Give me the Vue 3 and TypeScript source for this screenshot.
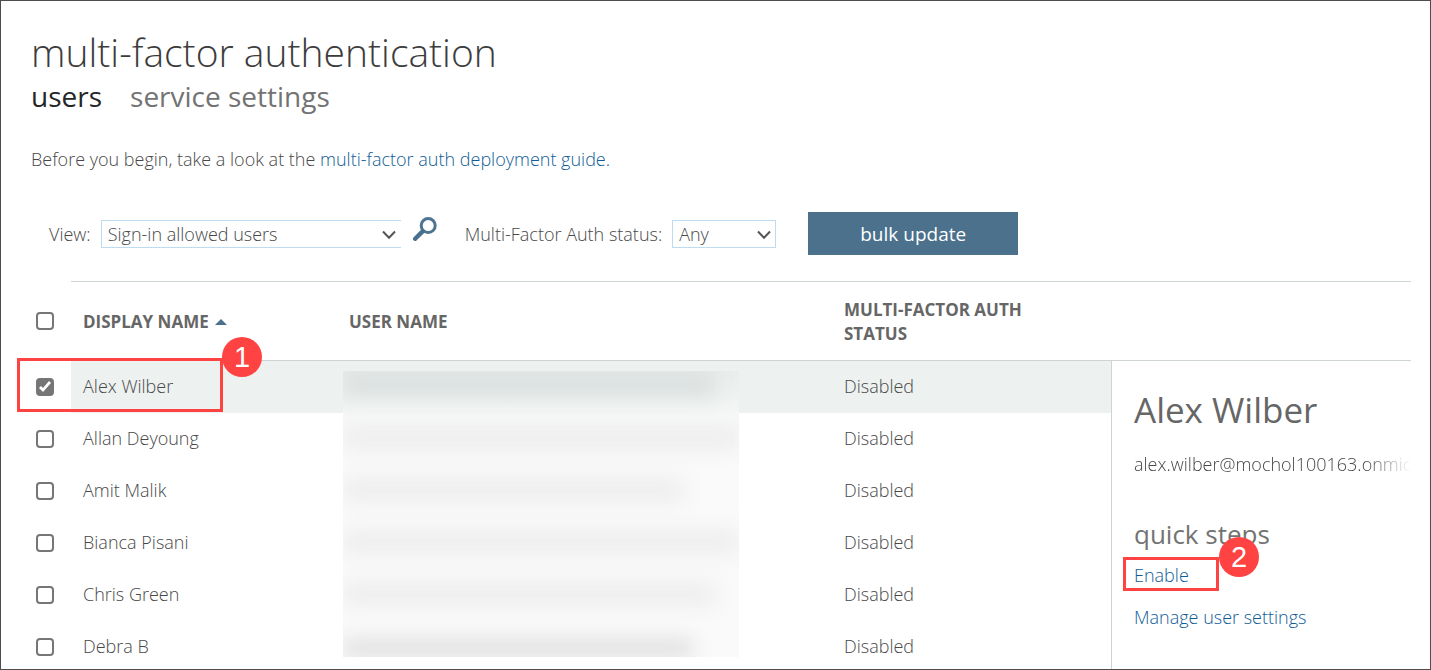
<script setup lang="ts">
import { computed, ref } from 'vue'

interface User {
  id: number
  name: string
  status: string
  selected: boolean
}

const users = ref<User[]>([
  { id: 1, name: 'Alex Wilber', status: 'Disabled', selected: true },
  { id: 2, name: 'Allan Deyoung', status: 'Disabled', selected: false },
  { id: 3, name: 'Amit Malik', status: 'Disabled', selected: false },
  { id: 4, name: 'Bianca Pisani', status: 'Disabled', selected: false },
  { id: 5, name: 'Chris Green', status: 'Disabled', selected: false },
  { id: 6, name: 'Debra B', status: 'Disabled', selected: false },
])

const view = ref('allowed')
const status = ref('any')

const allSelected = computed({
  get: () => users.value.every((u) => u.selected),
  set: (value: boolean) => users.value.forEach((u) => (u.selected = value)),
})
</script>

<template>
  <main class="page">
    <header class="head">
      <h1>multi-factor authentication</h1>
      <nav class="tabs">
        <a href="#users" class="tab current" aria-current="page">users</a>
        <a href="#settings" class="tab">service settings</a>
      </nav>
      <p class="intro">
        Before you begin, take a look at the
        <a href="#guide">multi-factor auth deployment guide.</a>
      </p>
    </header>

    <form class="filters" @submit.prevent>
      <label for="view">View:</label>
      <span class="picker wide">
        <select id="view" v-model="view">
          <option value="allowed">Sign-in allowed users</option>
          <option value="blocked">Sign-in blocked users</option>
        </select>
        <svg class="chevron" viewBox="0 0 14 10" aria-hidden="true"><path d="M1 1.5 7 7.7 13 1.5" /></svg>
      </span>
      <button class="search" type="submit" aria-label="Search">
        <svg viewBox="0 0 24 24" aria-hidden="true">
          <circle cx="15.2" cy="8.6" r="7" fill="#fff" stroke="#4d7592" stroke-width="3" />
          <path d="M9.6 14.4 2.2 21.8" stroke="#4a708b" stroke-width="4.4" stroke-linecap="round" />
        </svg>
      </button>
      <label for="status">Multi-Factor Auth status:</label>
      <span class="picker narrow">
        <select id="status" v-model="status">
          <option value="any">Any</option>
          <option value="enabled">Enabled</option>
          <option value="enforced">Enforced</option>
        </select>
        <svg class="chevron" viewBox="0 0 14 10" aria-hidden="true"><path d="M1 1.5 7 7.7 13 1.5" /></svg>
      </span>
      <button class="bulk" type="button">bulk update</button>
    </form>

    <section class="content">
      <div class="list">
        <table>
          <colgroup>
            <col class="c-check" />
            <col class="c-name" />
            <col class="c-user" />
            <col />
          </colgroup>
          <thead>
            <tr>
              <td class="check"><input v-model="allSelected" type="checkbox" aria-label="Select all users" /></td>
              <th scope="col">
                DISPLAY NAME
                <svg class="sort" viewBox="0 0 12 6" aria-hidden="true"><path d="M0 6 6 0l6 6z" /></svg>
              </th>
              <th scope="col">USER NAME</th>
              <th scope="col" class="status-head">MULTI-FACTOR AUTH STATUS</th>
            </tr>
          </thead>
          <tbody>
            <tr v-for="user in users" :key="user.id" :class="{ selected: user.selected }">
              <td class="check"><input :id="`user-${user.id}`" v-model="user.selected" type="checkbox" /></td>
              <td><label :for="`user-${user.id}`">{{ user.name }}</label></td>
              <td></td>
              <td>{{ user.status }}</td>
            </tr>
          </tbody>
        </table>
        <div class="redacted" aria-hidden="true">
          <i v-for="n in 6" :key="n" :class="`smear s${n}`"></i>
        </div>
        <div class="callout first"><b>1</b></div>
      </div>

      <aside class="side">
        <div class="side-head"></div>
        <div class="side-body">
          <h2>Alex Wilber</h2>
          <p class="mail">alex.wilber@mochol100163.onmicrosoft.com</p>
          <h3>quick steps</h3>
          <div class="step">
            <a href="#enable">Enable</a>
            <div class="callout second"><b>2</b></div>
          </div>
          <div class="step"><a href="#manage">Manage user settings</a></div>
        </div>
      </aside>
    </section>
  </main>
</template>

<style>
body {
  background: #fff;
}
</style>

<style scoped>
* {
  box-sizing: border-box;
}

.page {
  height: 100vh;
  overflow: hidden;
  border: 1px solid #504b4e;
  color: #484848;
  background: #fff;
  font: 300 18px/24px "Open Sans", "Noto Sans", sans-serif;
}

h1,
h2,
h3,
p {
  margin: 0;
}

h2,
h3 {
  font-weight: 400;
}

a {
  color: #0f5c96;
  text-decoration: none;
}

.head {
  padding: 23px 30px 0;
}

h1 {
  color: #3c3c3c;
  font-size: 39px;
  line-height: 56px;
  font-weight: 300;
}

.tabs {
  display: flex;
  gap: 28px;
  font-size: 28px;
  line-height: 32px;
  font-weight: 400;
}

.tab {
  color: #737373;
}

.tab.current {
  color: #262626;
}

.intro {
  margin-top: 35px;
}

.filters {
  display: flex;
  align-items: center;
  height: 44px;
  margin-top: 41px;
  padding-left: 48px;
}

.picker {
  position: relative;
  height: 28px;
  margin-left: 10px;
}

.wide {
  width: 300px;
}

.narrow {
  width: 104px;
}

select {
  appearance: none;
  width: 100%;
  height: 28px;
  padding: 0 24px 0 6px;
  border: 1px solid #bddcf2;
  border-radius: 0;
  background: #fff;
  color: inherit;
  font: inherit;
  line-height: 24px;
}

.wide select {
  border-right: 0;
}

.chevron {
  position: absolute;
  right: 5px;
  top: 10px;
  width: 14px;
  height: 10px;
  fill: none;
  stroke: #555;
  stroke-width: 2;
  pointer-events: none;
}

button {
  padding: 0;
  border: 0;
  font: inherit;
  cursor: pointer;
}

.search {
  width: 24px;
  height: 24px;
  margin: 0 28px 10px 12px;
  background: none;
}

.search svg {
  display: block;
  fill: none;
}

.bulk {
  align-self: flex-start;
  width: 210px;
  height: 43px;
  padding-top: 1px;
  margin-left: 32px;
  background: #4b718d;
  color: #fff;
  font-size: 19px;
  font-weight: 400;
}

.content {
  display: flex;
  margin: 25px 19px 0 17px;
}

.list {
  position: relative;
  flex: 1;
}

table {
  width: 100%;
  table-layout: fixed;
  border-spacing: 0;
}

.c-check {
  width: 53px;
}

.c-name {
  width: 266px;
}

.c-user {
  width: 495px;
}

th,
td {
  padding: 0 0 0 12px;
  text-align: left;
}

thead th {
  height: 80px;
  padding-top: 2px;
  border-top: 1px solid #ced4d4;
  border-bottom: 1px solid #ced4d4;
  color: #666;
  font-size: 17px;
  font-weight: 700;
}

.status-head {
  padding-right: 80px;
}

.sort {
  width: 12px;
  height: 6px;
  margin-left: 2px;
  vertical-align: 3px;
  fill: #4b718d;
}

tbody td {
  height: 52px;
}

tbody td:not(.check) {
  padding-bottom: 2px;
}

tbody .selected td:not(.check) {
  background: #edf1f0;
}

.check {
  padding-left: 18px;
}

.check input {
  appearance: none;
  display: block;
  width: 18px;
  height: 18px;
  margin: 0;
  border: 2px solid #767676;
  border-radius: 4px;
  background: #fff;
}

.check input:checked {
  background: #767676;
}

.check input:checked::after {
  content: "";
  display: block;
  width: 14px;
  height: 14px;
  background: #fff;
  clip-path: polygon(1px 8px, 3px 6px, 5px 8px, 11px 1px, 13px 3px, 5px 12px);
}

.redacted {
  position: absolute;
  left: 325px;
  top: 90px;
  display: grid;
  grid-template-rows: 41px repeat(4, 52px) 37px;
  width: 396px;
  height: 286px;
  overflow: hidden;
  background: linear-gradient(#e9edec, #f0f3f2 30px, #f7f8f8 44px, #fafafa 80px);
}

.smear {
  align-self: center;
  height: 24px;
  background: #ededed;
  filter: blur(10px);
}

.s1 {
  align-self: start;
  height: 26px;
  margin-right: 24px;
  background: #dbe0df;
}

.s3 {
  margin-right: 56px;
}

.s5 {
  margin-right: 24px;
}

.s6 {
  align-self: end;
  height: 18px;
  margin-right: 46px;
  background: #dedede;
}

.callout {
  position: absolute;
  border: 3px solid #ff4343;
  pointer-events: none;
}

.callout b {
  position: absolute;
  width: 40px;
  height: 40px;
  border-radius: 50%;
  background: #ff4343;
  color: #fff;
  font: 400 29px/40px "Liberation Sans", Arial, sans-serif;
  text-align: center;
}

.first {
  left: -1px;
  top: 77px;
  width: 206px;
  height: 54px;
}

.first b {
  left: 202px;
  top: -24px;
}

.second {
  left: -11px;
  top: -6px;
  width: 96px;
  height: 34px;
}

.second b {
  left: 93px;
  top: -23px;
}

.side {
  width: 300px;
}

.side-head {
  height: 80px;
  border-top: 1px solid #ced4d4;
  border-bottom: 1px solid #ced4d4;
}

.side-body {
  height: 312px;
  padding: 23px 0 0 22px;
  border-left: 1px solid #ced4d4;
}

h2 {
  color: #666;
  font-size: 35px;
  line-height: 52px;
}

.mail {
  margin-top: 16px;
  overflow: hidden;
  white-space: nowrap;
  mask-image: linear-gradient(to right, #000 84%, transparent);
}

h3 {
  margin-top: 40px;
  font-size: 26px;
  line-height: 36px;
  color: #737373;
}

.step {
  position: relative;
  margin: 11px 0 18px;
}
</style>
